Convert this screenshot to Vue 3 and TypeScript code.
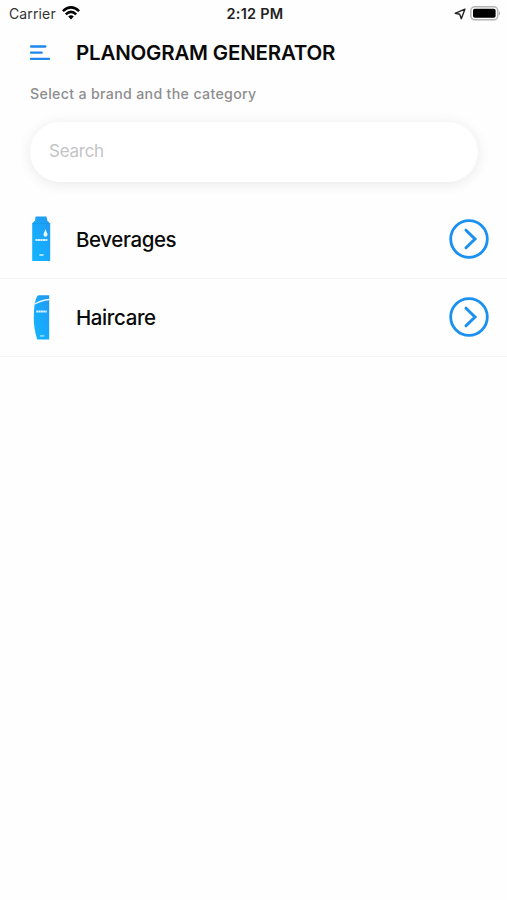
<script setup lang="ts">
import { ref } from 'vue'

type CategoryIcon = 'carton' | 'bottle'

interface Category {
  name: string
  icon: CategoryIcon
}

const query = ref('')
const categories: Category[] = [
  { name: 'Beverages', icon: 'carton' },
  { name: 'Haircare', icon: 'bottle' },
]
</script>

<template>
  <main class="screen">
    <div class="status">
      <div class="status-left">
        <span class="carrier">Carrier</span>
        <svg class="wifi" width="18" height="14" viewBox="0 0 18 14" fill="none" stroke="#000" stroke-width="2.5">
          <path d="M.9 5.1Q9-2.4 17.1 5.1" />
          <path d="M3.8 8.3Q9 3.4 14.2 8.3" />
          <path d="M6.2 10.6Q9 8 11.8 10.6L9 13.6Z" fill="#000" stroke="none" />
        </svg>
      </div>
      <span class="time">2:12 PM</span>
      <div class="status-right">
        <svg width="12" height="12" viewBox="0 0 12 12" fill="none" stroke="#222" stroke-width="1.4" stroke-linejoin="round">
          <path d="M10.9 1.2 1.2 5.3 5.7 6.3 7.3 10.7Z" />
        </svg>
        <svg width="31" height="15" viewBox="0 0 31 15">
          <rect x=".8" y=".8" width="27" height="13" rx="4" fill="#fff" stroke="#b4b4b4" stroke-width="1.5" />
          <rect x="3" y="2.8" width="22.6" height="9" rx="1.8" fill="#000" />
          <path d="M29 5.2Q31 7.3 29 9.4Z" fill="#aaa" />
        </svg>
      </div>
    </div>

    <header class="header">
      <button class="menu" aria-label="Menu">
        <svg width="22" height="17" viewBox="0 0 22 17" stroke="#2186eb" stroke-width="2.3" stroke-linecap="round">
          <path d="M2 1.5H16.4M2 7.7H12.7M2 13.9H20" />
        </svg>
      </button>
      <h1 class="title">PLANOGRAM GENERATOR</h1>
    </header>

    <p class="hint">Select a brand and the category</p>
    <input v-model="query" class="search" type="text" placeholder="Search" />

    <ul class="list">
      <li v-for="category in categories" :key="category.name" class="row">
        <svg v-if="category.icon === 'carton'" class="product" width="20" height="46" viewBox="0 0 20 46">
          <defs>
            <linearGradient id="carton-fill" x1="0" y1="1" x2="1" y2="0">
              <stop offset="0" stop-color="#12b5ff" />
              <stop offset=".6" stop-color="#1ba6fb" />
              <stop offset="1" stop-color="#2496ee" />
            </linearGradient>
          </defs>
          <path d="M4.6.5H15.4L16.4 4.8 19.2 7.5V45H1.2V7.5L4 4.8Z" fill="url(#carton-fill)" />
          <path d="M4 5 1.2 7.5H19.2" fill="none" stroke="#1688d8" stroke-width=".6" opacity=".6" />
          <path d="M14.5 13C13.8 15.7 12.5 17.2 12.5 18.7A2 2 0 0 0 16.5 18.7C16.5 17.2 15.2 15.7 14.5 13Z" fill="#e9f8ff" />
          <path d="M4.5 24H16.4" stroke="#d9f2ff" stroke-width="2" stroke-dasharray="2.2 .3" />
          <path d="M8.4 39H12.6" stroke="#c9edff" stroke-width="1.6" />
        </svg>
        <svg v-else class="product" width="20" height="46" viewBox="0 0 20 46">
          <defs>
            <linearGradient id="bottle-fill" x1="0" y1="1" x2="1" y2="0">
              <stop offset="0" stop-color="#12b5ff" />
              <stop offset=".6" stop-color="#1ba6fb" />
              <stop offset="1" stop-color="#2496ee" />
            </linearGradient>
          </defs>
          <path d="M7.8.2H18.2V44.4H6.2Q2.6 33.6 2.8 22.6Q2.9 5.6 6.4 1.1Q7 .2 7.8.2Z" fill="url(#bottle-fill)" />
          <path d="M3.8 9Q10 5.3 18.5 4.5" fill="none" stroke="#eefaff" stroke-width="1.3" />
          <path d="M5.3 16.4H15.8" stroke="#d9f2ff" stroke-width="2" stroke-dasharray="2 .3" />
          <path d="M8.9 40.9H13.4" stroke="#aee3ff" stroke-width="1.3" />
        </svg>
        <span class="name">{{ category.name }}</span>
        <button class="open" :aria-label="category.name">
          <svg width="40" height="40" viewBox="0 0 40 40" fill="none" stroke="#1a91f0" stroke-width="2.8">
            <circle cx="20" cy="20" r="18.3" />
            <path d="M17 11.2 26 20 17 28.8" stroke-width="3" stroke-linecap="round" stroke-linejoin="miter" />
          </svg>
        </button>
      </li>
    </ul>
  </main>
</template>

<style>
body {
  background: #fefefe;
}
</style>

<style scoped>
.screen {
  box-sizing: border-box;
  width: 100%;
  min-height: 900px;
  background: #fefefe;
  color: #0a0a0a;
  font-family: Inter, 'Liberation Sans', sans-serif;
}
.status {
  display: grid;
  grid-template-columns: 1fr auto 1fr;
  align-items: center;
  height: 28px;
  padding: 0 6px 0 9px;
  font-size: 14px;
  line-height: 28px;
}
.status-left,
.status-right {
  display: flex;
  align-items: center;
}
.status-left {
  gap: 6px;
}
.carrier {
  color: #333;
  letter-spacing: 0.13px;
}
.wifi {
  margin-bottom: 2px;
}
.time {
  font-weight: 600;
  color: #222;
  font-size: 14.5px;
  letter-spacing: 0.25px;
}
.status-right {
  justify-content: flex-end;
  gap: 4px;
  padding-bottom: 1px;
}
.header {
  display: flex;
  align-items: center;
  height: 50px;
  padding-left: 29px;
}
button {
  display: block;
  padding: 0;
  border: 0;
  background: none;
}
button svg {
  display: block;
}
.menu {
  width: 47px;
}
.title {
  margin: 0;
  font-size: 20.5px;
  font-weight: 600;
  letter-spacing: -0.2px;
  line-height: 28px;
}
.hint {
  margin: 6px 0 18px 30px;
  color: #8e8e8e;
  font-size: 14.2px;
  font-weight: 550;
  letter-spacing: 0.32px;
  line-height: 20px;
}
.search {
  display: block;
  box-sizing: border-box;
  width: 448px;
  height: 60px;
  margin-left: 30px;
  padding: 0 19px 2px;
  border: 0;
  border-radius: 30px;
  outline: 0;
  background: #fff;
  box-shadow: 0 2px 14px rgba(0, 0, 0, 0.09);
  color: #111;
  font: 400 17px/24px Inter, 'Liberation Sans', sans-serif;
  letter-spacing: -0.25px;
}
.search::placeholder {
  color: #c4c4c6;
  opacity: 1;
}
.list {
  margin: 18px 0 0;
  padding: 0;
  list-style: none;
}
.row {
  display: flex;
  align-items: center;
  box-sizing: border-box;
  height: 78.5px;
  padding: 0 18px 0 31px;
  border-bottom: 1px solid #f4f4f4;
}
.product {
  margin-top: 1px;
}
.name {
  flex: 1;
  margin-left: 25px;
  padding-top: 2px;
  font-size: 20.5px;
  font-weight: 500;
  letter-spacing: -0.4px;
  line-height: 28px;
}
</style>
